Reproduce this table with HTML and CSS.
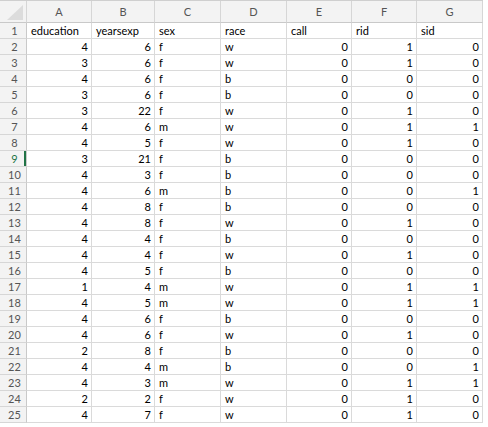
FILE: index.html
```html
<!DOCTYPE html>
<html>
<head>
<meta charset="utf-8">
<link rel="stylesheet" href="styles.css">
</head>
<body>
<div class="sheet">
  <div class="hdr corner"><svg class="tri" width="16" height="15" viewBox="0 0 16 15"><polygon points="16,0 16,15 0,15" fill="#dcdcdc"/></svg></div>
  <div class="hdr">A</div><div class="hdr">B</div><div class="hdr">C</div><div class="hdr">D</div><div class="hdr">E</div><div class="hdr">F</div><div class="hdr">G</div>

  <div class="rn">1</div><div class="c">education</div><div class="c">yearsexp</div><div class="c">sex</div><div class="c">race</div><div class="c">call</div><div class="c">rid</div><div class="c">sid</div>
  <div class="rn">2</div><div class="c n">4</div><div class="c n">6</div><div class="c">f</div><div class="c">w</div><div class="c n">0</div><div class="c n">1</div><div class="c n">0</div>
  <div class="rn">3</div><div class="c n">3</div><div class="c n">6</div><div class="c">f</div><div class="c">w</div><div class="c n">0</div><div class="c n">1</div><div class="c n">0</div>
  <div class="rn">4</div><div class="c n">4</div><div class="c n">6</div><div class="c">f</div><div class="c">b</div><div class="c n">0</div><div class="c n">0</div><div class="c n">0</div>
  <div class="rn">5</div><div class="c n">3</div><div class="c n">6</div><div class="c">f</div><div class="c">b</div><div class="c n">0</div><div class="c n">0</div><div class="c n">0</div>
  <div class="rn">6</div><div class="c n">3</div><div class="c n">22</div><div class="c">f</div><div class="c">w</div><div class="c n">0</div><div class="c n">1</div><div class="c n">0</div>
  <div class="rn">7</div><div class="c n">4</div><div class="c n">6</div><div class="c">m</div><div class="c">w</div><div class="c n">0</div><div class="c n">1</div><div class="c n">1</div>
  <div class="rn">8</div><div class="c n">4</div><div class="c n">5</div><div class="c">f</div><div class="c">w</div><div class="c n">0</div><div class="c n">1</div><div class="c n">0</div>
  <div class="rn sel">9</div><div class="c n">3</div><div class="c n">21</div><div class="c">f</div><div class="c">b</div><div class="c n">0</div><div class="c n">0</div><div class="c n">0</div>
  <div class="rn">10</div><div class="c n">4</div><div class="c n">3</div><div class="c">f</div><div class="c">b</div><div class="c n">0</div><div class="c n">0</div><div class="c n">0</div>
  <div class="rn">11</div><div class="c n">4</div><div class="c n">6</div><div class="c">m</div><div class="c">b</div><div class="c n">0</div><div class="c n">0</div><div class="c n">1</div>
  <div class="rn">12</div><div class="c n">4</div><div class="c n">8</div><div class="c">f</div><div class="c">b</div><div class="c n">0</div><div class="c n">0</div><div class="c n">0</div>
  <div class="rn">13</div><div class="c n">4</div><div class="c n">8</div><div class="c">f</div><div class="c">w</div><div class="c n">0</div><div class="c n">1</div><div class="c n">0</div>
  <div class="rn">14</div><div class="c n">4</div><div class="c n">4</div><div class="c">f</div><div class="c">b</div><div class="c n">0</div><div class="c n">0</div><div class="c n">0</div>
  <div class="rn">15</div><div class="c n">4</div><div class="c n">4</div><div class="c">f</div><div class="c">w</div><div class="c n">0</div><div class="c n">1</div><div class="c n">0</div>
  <div class="rn">16</div><div class="c n">4</div><div class="c n">5</div><div class="c">f</div><div class="c">b</div><div class="c n">0</div><div class="c n">0</div><div class="c n">0</div>
  <div class="rn">17</div><div class="c n">1</div><div class="c n">4</div><div class="c">m</div><div class="c">w</div><div class="c n">0</div><div class="c n">1</div><div class="c n">1</div>
  <div class="rn">18</div><div class="c n">4</div><div class="c n">5</div><div class="c">m</div><div class="c">w</div><div class="c n">0</div><div class="c n">1</div><div class="c n">1</div>
  <div class="rn">19</div><div class="c n">4</div><div class="c n">6</div><div class="c">f</div><div class="c">b</div><div class="c n">0</div><div class="c n">0</div><div class="c n">0</div>
  <div class="rn">20</div><div class="c n">4</div><div class="c n">6</div><div class="c">f</div><div class="c">w</div><div class="c n">0</div><div class="c n">1</div><div class="c n">0</div>
  <div class="rn">21</div><div class="c n">2</div><div class="c n">8</div><div class="c">f</div><div class="c">b</div><div class="c n">0</div><div class="c n">0</div><div class="c n">0</div>
  <div class="rn">22</div><div class="c n">4</div><div class="c n">4</div><div class="c">m</div><div class="c">b</div><div class="c n">0</div><div class="c n">0</div><div class="c n">1</div>
  <div class="rn">23</div><div class="c n">4</div><div class="c n">3</div><div class="c">m</div><div class="c">w</div><div class="c n">0</div><div class="c n">1</div><div class="c n">1</div>
  <div class="rn">24</div><div class="c n">2</div><div class="c n">2</div><div class="c">f</div><div class="c">w</div><div class="c n">0</div><div class="c n">1</div><div class="c n">0</div>
  <div class="rn">25</div><div class="c n">4</div><div class="c n">7</div><div class="c">f</div><div class="c">w</div><div class="c n">0</div><div class="c n">1</div><div class="c n">0</div>
</div>
</body>
</html>
```
FILE: styles.css
```css
html, body {
  margin: 0;
  padding: 0;
  background: #fff;
}
body {
  font-family: Lato, "Liberation Sans", sans-serif;
  font-size: 11px;
  color: #000;
}
.sheet {
  display: grid;
  grid-template-columns: 27px 65px 63px 66px 66px 65px 65px 66px;
  grid-template-rows: 22px repeat(25, 16px);
  width: 483px;
  border-top: 1px solid #cfcfcf;
}
.sheet > div {
  box-sizing: border-box;
  border-right: 1px solid #dadada;
  border-bottom: 1px solid #dadada;
  overflow: hidden;
  white-space: nowrap;
}
.hdr {
  background: #f3f3f3;
  color: #555;
  text-align: center;
  line-height: 21px;
  border-bottom-color: #c9c9c9 !important;
  border-right-color: #d6d6d6 !important;
}
.corner {
  position: relative;
}
.tri {
  position: absolute;
  right: 3px;
  bottom: 2px;
}
.rn {
  background: #f3f3f3;
  color: #555;
  text-align: center;
  padding-left: 3px;
  line-height: 15px;
  border-right-color: #c9c9c9 !important;
  border-bottom-color: #d6d6d6 !important;
}
.rn.sel {
  color: #217346;
  box-shadow: inset -2px 0 0 #217346;
}
.c {
  line-height: 15px;
  padding: 0 3px 0 4px;
}
.c.n {
  text-align: right;
}
```
